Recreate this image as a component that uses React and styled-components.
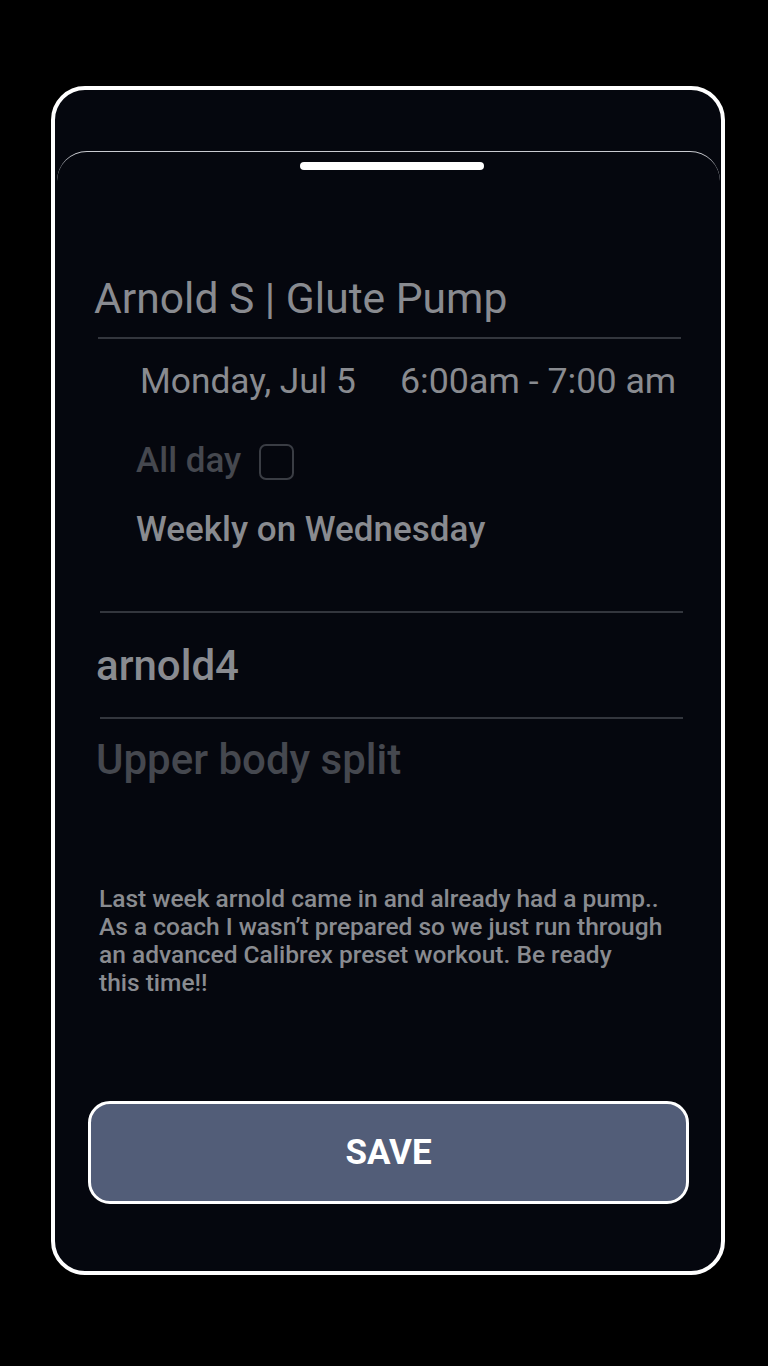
import React from "react";
import styled, { createGlobalStyle } from "styled-components";

const Global = createGlobalStyle`
  html, body { margin: 0; padding: 0; background: #000; }
  body { font-family: Roboto, "Liberation Sans", sans-serif; }
  * { box-sizing: border-box; }
`;

const Page = styled.div`
  width: 768px;
  min-height: 1366px;
  background: #000;
  padding: 86px 0 0 51px;
`;

const Frame = styled.div`
  width: 674px;
  height: 1189px;
  border: 4px solid #ffffff;
  border-radius: 34px;
  background: #05070e;
  padding-top: 61px;
  overflow: hidden;
`;

const Sheet = styled.div`
  margin: 0 1px 0 2px;
  border-top: 1px solid #c9cbd0;
  border-radius: 30px 30px 0 0;
  display: flex;
  flex-direction: column;
  align-items: flex-start;
`;

const Handle = styled.div`
  width: 184px;
  height: 8px;
  border-radius: 4px;
  background: #ffffff;
  margin: 10px 0 0 243px;
`;

const Text = styled.div`
  font-family: Roboto, "Liberation Sans", sans-serif;
  font-size: ${(p) => p.$size}px;
  line-height: ${(p) => p.$lh || p.$size}px;
  font-weight: ${(p) => p.$weight || 400};
  color: ${(p) => (p.$dim ? "#45484f" : "#898b90")};
  margin-top: ${(p) => p.$top}px;
  margin-left: ${(p) => p.$left}px;
  white-space: pre-line;
`;

const Divider = styled.div`
  width: 583px;
  height: 2px;
  background: #33363d;
  margin-top: ${(p) => p.$top}px;
  margin-left: ${(p) => p.$left}px;
`;

const DateRow = styled.div`
  display: flex;
  gap: 44px;
  margin-top: ${(p) => p.$top}px;
  margin-left: ${(p) => p.$left}px;
`;

const DateText = styled.span`
  font-size: ${(p) => p.$size}px;
  line-height: 35.5px;
  color: #898b90;
`;

const AllDayRow = styled.div`
  display: flex;
  align-items: center;
  gap: 18px;
  height: 36px;
  margin-top: 44px;
  margin-left: 79px;
`;

const AllDayLabel = styled.span`
  font-size: 35px;
  line-height: 36px;
  font-weight: 500;
  color: #45484f;
`;

const Checkbox = styled.span`
  width: 35px;
  height: 36px;
  border: 2px solid #3a3d44;
  border-radius: 7px;
  margin-top: 2px;
`;

const SaveButton = styled.button`
  width: 601px;
  height: 103px;
  margin: 104px 0 0 31px;
  border: 3px solid #ffffff;
  border-radius: 22px;
  background: #525d78;
  color: #ffffff;
  font-family: Roboto, "Liberation Sans", sans-serif;
  font-weight: 700;
  font-size: 35px;
  letter-spacing: 0;
  cursor: pointer;
`;

export default function App() {
  return (
    <Page>
      <Global />
      <Frame>
        <Sheet>
          <Handle />
          <Text $size={42.6} $top={106.5} $left={37}>Arnold S | Glute Pump</Text>
          <Divider $top={17.75} $left={41} />
          <DateRow $top={25} $left={83}>
            <DateText $size={35.3}>Monday, Jul 5</DateText>
            <DateText $size={35.8}>6:00am - 7:00 am</DateText>
          </DateRow>
          <AllDayRow>
            <AllDayLabel>All day</AllDayLabel>
            <Checkbox />
          </AllDayRow>
          <Text $size={35} $weight={500} $top={33} $left={79}>Weekly on Wednesday</Text>
          <Divider $top={64} $left={43} />
          <Text $size={42} $weight={500} $top={32} $left={39}>arnold4</Text>
          <Divider $top={30} $left={43} />
          <Text $size={42} $weight={500} $dim $top={20} $left={39}>Upper body split</Text>
          <Text $size={24.5} $lh={28} $weight={500} $top={104} $left={42}>
            {"Last week arnold came in and already had a pump..\nAs a coach I wasn’t prepared so we just run through\nan advanced Calibrex preset workout. Be ready\nthis time!!"}
          </Text>
          <SaveButton>SAVE</SaveButton>
        </Sheet>
      </Frame>
    </Page>
  );
}
